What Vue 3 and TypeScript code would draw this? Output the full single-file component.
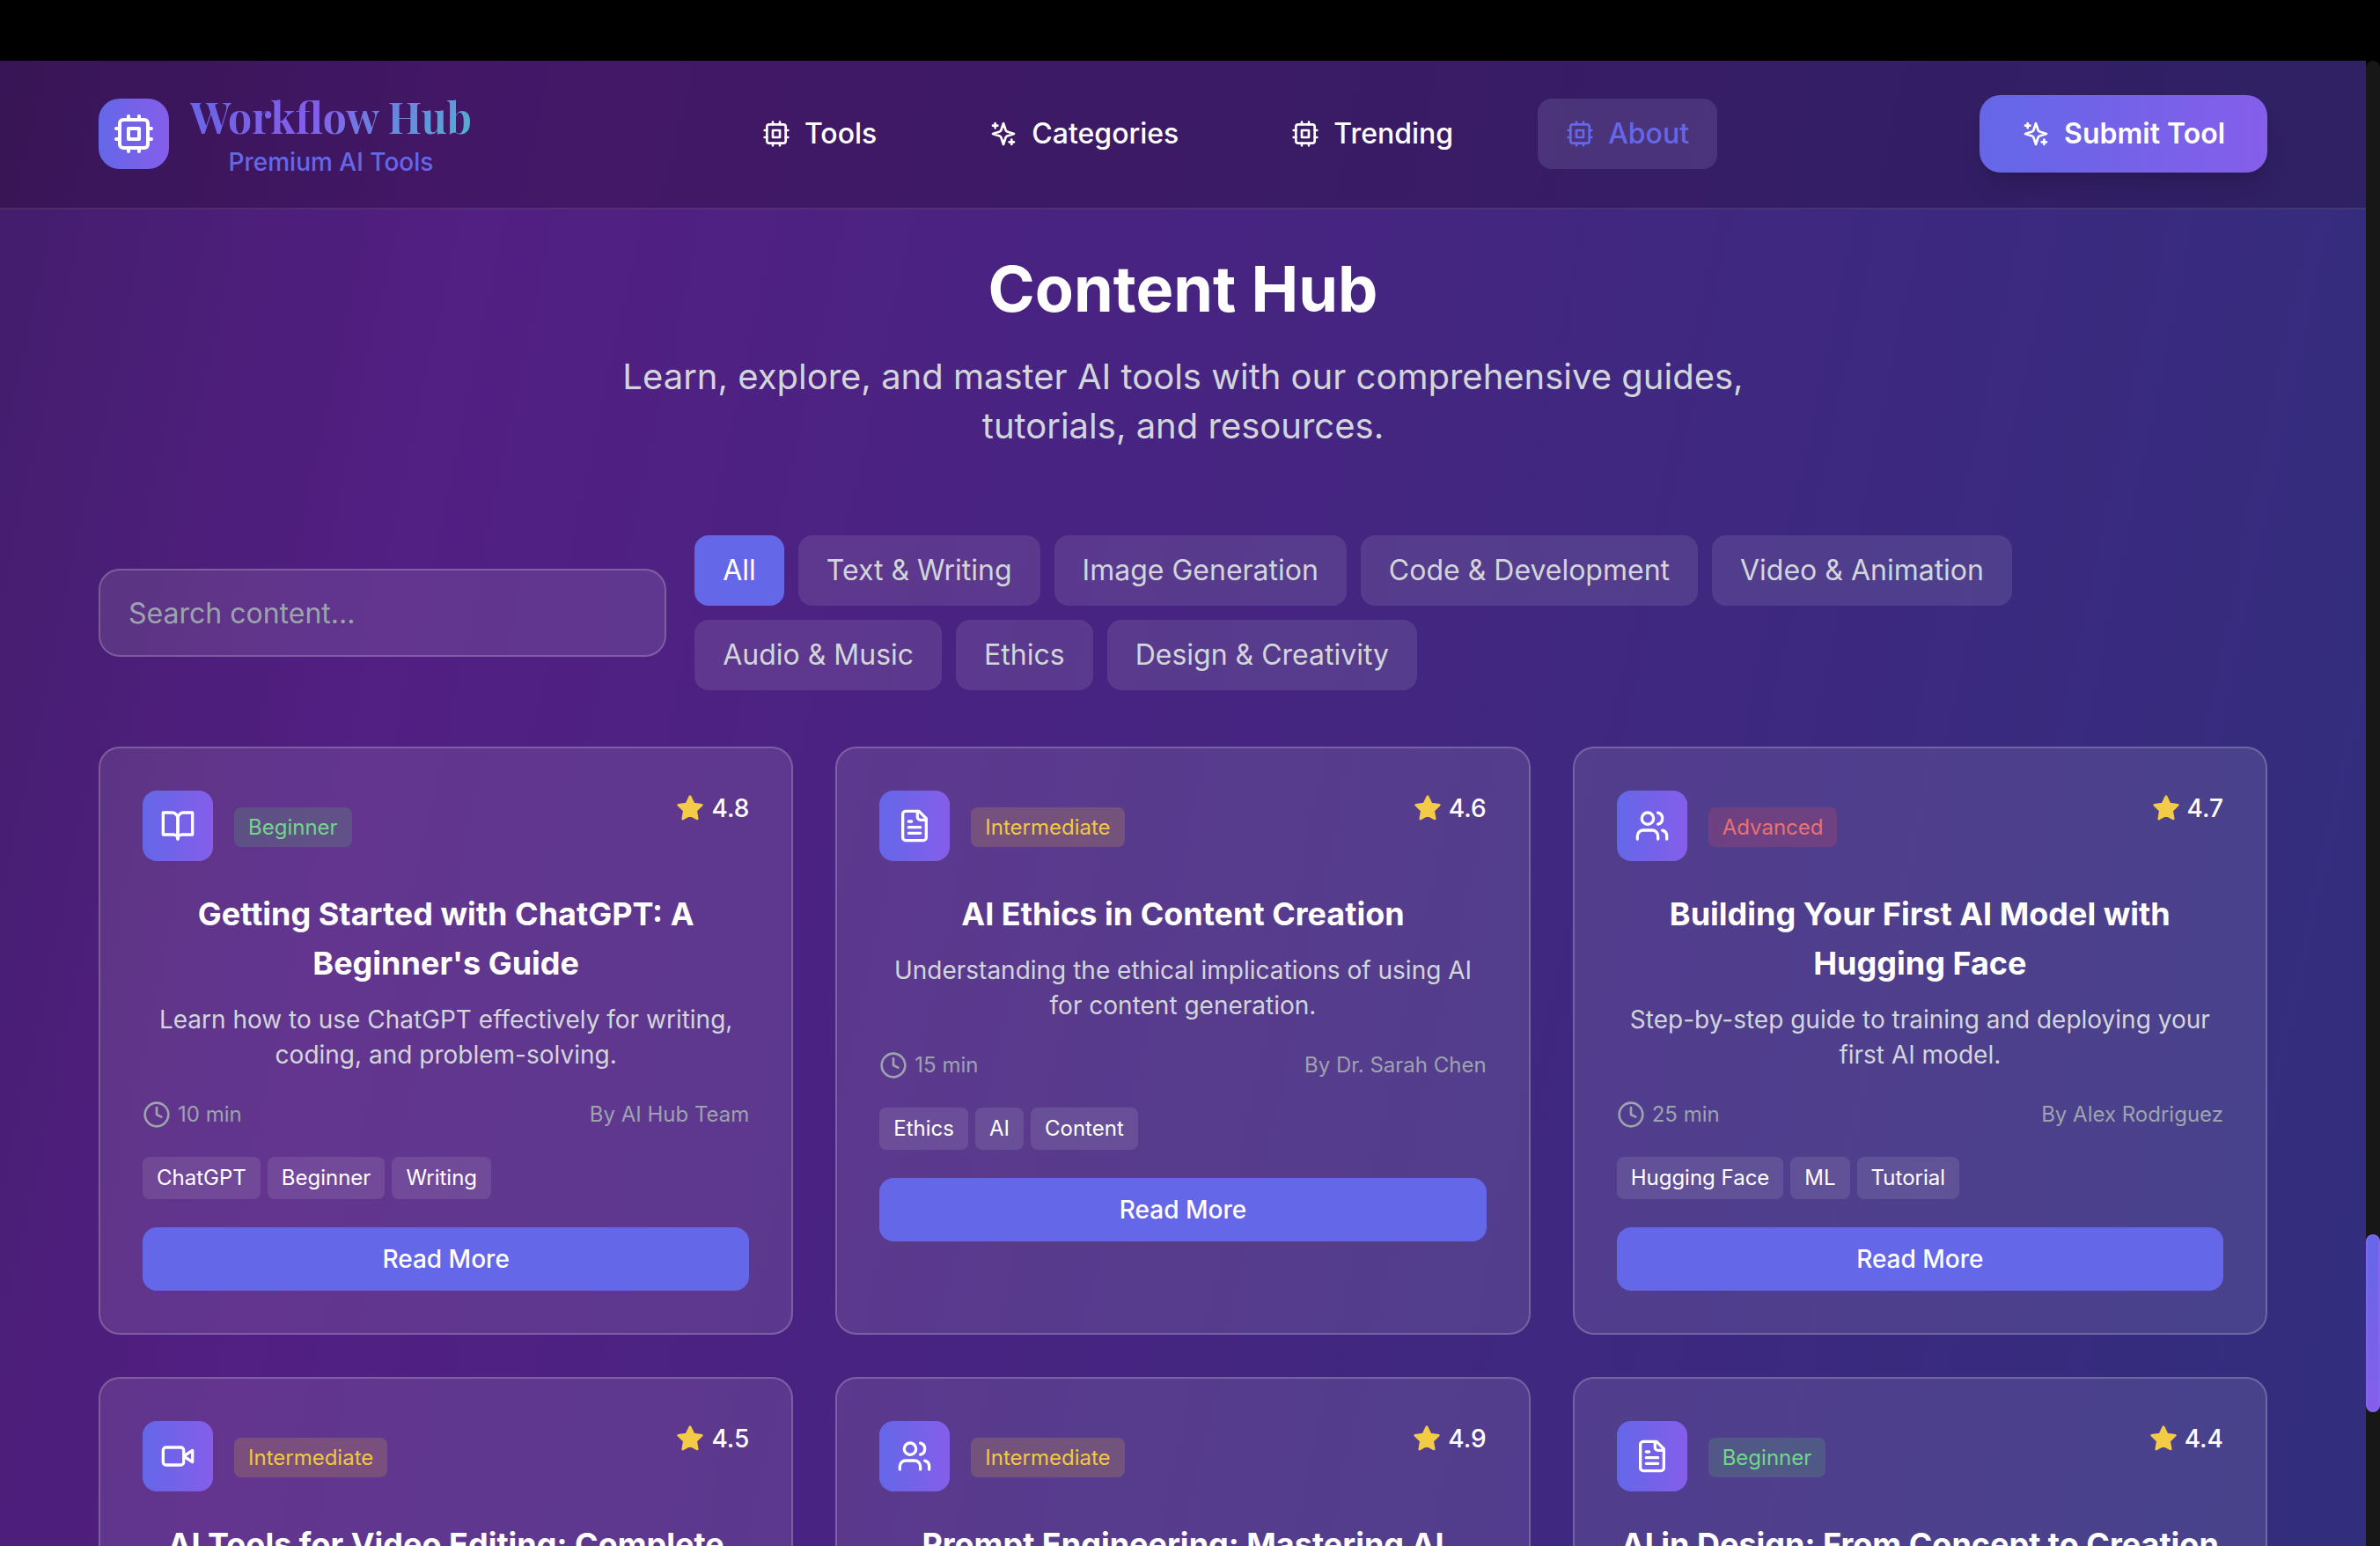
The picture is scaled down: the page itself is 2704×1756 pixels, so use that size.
<script setup lang="ts">
import { h, ref } from 'vue'

type Level = 'Beginner' | 'Intermediate' | 'Advanced'

interface Guide {
  icon: string
  level: Level
  rating: string
  title: string
  summary?: string
  duration?: string
  author?: string
  tags?: string[]
}

/* 24-unit stroke icons, each a list of path outlines */
const glyphs: Record<string, string[]> = {
  chip: [
    'M6 4h12a2 2 0 0 1 2 2v12a2 2 0 0 1-2 2H6a2 2 0 0 1-2-2V6a2 2 0 0 1 2-2z',
    'M9 9h6v6H9z',
    'M15 2v2M15 20v2M2 15h2M2 9h2M20 15h2M20 9h2M9 2v2M9 20v2',
  ],
  sparkles: [
    'm12 3-1.912 5.813a2 2 0 0 1-1.275 1.275L3 12l5.813 1.912a2 2 0 0 1 1.275 1.275L12 21l1.912-5.813a2 2 0 0 1 1.275-1.275L21 12l-5.813-1.912a2 2 0 0 1-1.275-1.275L12 3Z',
    'M5 3v4M19 17v4M3 5h4M17 19h4',
  ],
  book: [
    'M2 3h6a4 4 0 0 1 4 4v14a3 3 0 0 0-3-3H2z',
    'M22 3h-6a4 4 0 0 0-4 4v14a3 3 0 0 1 3-3h7z',
  ],
  file: [
    'M15 2H6a2 2 0 0 0-2 2v16a2 2 0 0 0 2 2h12a2 2 0 0 0 2-2V7Z',
    'M14 2v4a2 2 0 0 0 2 2h4',
    'M10 9H8M16 13H8M16 17H8',
  ],
  users: [
    'M16 21v-2a4 4 0 0 0-4-4H6a4 4 0 0 0-4 4v2',
    'M13 7a4 4 0 1 1-8 0a4 4 0 1 1 8 0z',
    'M22 21v-2a4 4 0 0 0-3-3.87M16 3.13a4 4 0 0 1 0 7.75',
  ],
  video: [
    'm22 8-6 4 6 4V8Z',
    'M4 6h10a2 2 0 0 1 2 2v8a2 2 0 0 1-2 2H4a2 2 0 0 1-2-2V8a2 2 0 0 1 2-2z',
  ],
  star: ['M12 2l3.09 6.26L22 9.27l-5 4.87 1.18 6.88L12 17.77l-6.18 3.25L7 14.14 2 9.27l6.91-1.01L12 2z'],
  clock: ['M22 12a10 10 0 1 1-20 0a10 10 0 1 1 20 0z', 'M12 6v6l4 2'],
}

const Glyph = (props: { name: string }) =>
  h(
    'svg',
    { viewBox: '0 0 24 24', 'aria-hidden': 'true' },
    glyphs[props.name].map((d) => h('path', { d })),
  )
Glyph.props = ['name']

const links = [
  { label: 'Tools', icon: 'chip' },
  { label: 'Categories', icon: 'sparkles' },
  { label: 'Trending', icon: 'chip' },
  { label: 'About', icon: 'chip', current: true },
]

const categories = [
  'All',
  'Text & Writing',
  'Image Generation',
  'Code & Development',
  'Video & Animation',
  'Audio & Music',
  'Ethics',
  'Design & Creativity',
]

const selected = ref('All')
const query = ref('')

const guides: Guide[] = [
  {
    icon: 'book',
    level: 'Beginner',
    rating: '4.8',
    title: "Getting Started with ChatGPT: A Beginner's Guide",
    summary: 'Learn how to use ChatGPT effectively for writing, coding, and problem-solving.',
    duration: '10 min',
    author: 'AI Hub Team',
    tags: ['ChatGPT', 'Beginner', 'Writing'],
  },
  {
    icon: 'file',
    level: 'Intermediate',
    rating: '4.6',
    title: 'AI Ethics in Content Creation',
    summary: 'Understanding the ethical implications of using AI for content generation.',
    duration: '15 min',
    author: 'Dr. Sarah Chen',
    tags: ['Ethics', 'AI', 'Content'],
  },
  {
    icon: 'users',
    level: 'Advanced',
    rating: '4.7',
    title: 'Building Your First AI Model with Hugging Face',
    summary: 'Step-by-step guide to training and deploying your first AI model.',
    duration: '25 min',
    author: 'Alex Rodriguez',
    tags: ['Hugging Face', 'ML', 'Tutorial'],
  },
  { icon: 'video', level: 'Intermediate', rating: '4.5', title: 'AI Tools for Video Editing: Complete' },
  { icon: 'users', level: 'Intermediate', rating: '4.9', title: 'Prompt Engineering: Mastering AI' },
  { icon: 'file', level: 'Beginner', rating: '4.4', title: 'AI in Design: From Concept to Creation' },
]
</script>

<template>
  <div class="screen">
    <div class="top-strip"></div>
    <div class="viewport">
      <div class="page">
        <header class="header">
          <a class="brand" href="#">
            <span class="brand-mark"><Glyph name="chip" class="icon-lg" /></span>
            <span class="brand-text">
              <span class="brand-name">Workflow Hub</span>
              <span class="brand-tagline">Premium AI Tools</span>
            </span>
          </a>
          <nav class="nav">
            <a
              v-for="link in links"
              :key="link.label"
              href="#"
              class="nav-link"
              :class="{ current: link.current }"
            >
              <Glyph :name="link.icon" class="icon-sm" />
              <span>{{ link.label }}</span>
            </a>
          </nav>
          <button type="button" class="submit">
            <Glyph name="sparkles" class="icon-sm" />
            <span>Submit Tool</span>
          </button>
        </header>

        <main class="main">
          <div class="hero">
            <h1>Content Hub</h1>
            <p>Learn, explore, and master AI tools with our comprehensive guides, tutorials, and resources.</p>
          </div>

          <div class="controls">
            <input
              v-model="query"
              class="search"
              type="text"
              placeholder="Search content..."
              aria-label="Search content"
            />
            <div class="filters">
              <button
                v-for="category in categories"
                :key="category"
                type="button"
                class="filter"
                :class="{ active: category === selected }"
                @click="selected = category"
              >
                {{ category }}
              </button>
            </div>
          </div>

          <div class="cards">
            <article v-for="guide in guides" :key="guide.title" class="card">
              <div class="card-top">
                <div class="card-kind">
                  <span class="card-mark"><Glyph :name="guide.icon" class="icon-md" /></span>
                  <div>
                    <span class="badge" :class="guide.level.toLowerCase()">{{ guide.level }}</span>
                  </div>
                </div>
                <div class="rating">
                  <Glyph name="star" class="icon-sm star" />
                  <span>{{ guide.rating }}</span>
                </div>
              </div>
              <h2>{{ guide.title }}</h2>
              <template v-if="guide.summary">
                <p class="summary">{{ guide.summary }}</p>
                <div class="meta">
                  <span class="duration">
                    <Glyph name="clock" class="icon-sm" />
                    <span>{{ guide.duration }}</span>
                  </span>
                  <span>By {{ guide.author }}</span>
                </div>
                <ul class="tags">
                  <li v-for="tag in guide.tags" :key="tag">{{ tag }}</li>
                </ul>
                <button type="button" class="read-more">Read More</button>
              </template>
            </article>
          </div>
        </main>
      </div>
      <div class="scroll-track"><div class="scroll-thumb"></div></div>
    </div>
  </div>
</template>

<style>
body {
  margin: 0;
  background: #000;
}
</style>

<style scoped>
.screen {
  display: flex;
  flex-direction: column;
  height: 100vh;
  overflow: hidden;
  font-family: Inter, 'Liberation Sans', sans-serif;
  font-size: 32px;
  line-height: 48px;
  color: #fff;
}

.screen * {
  box-sizing: border-box;
}

button,
input {
  font: inherit;
  color: inherit;
  border: 0;
  margin: 0;
}

button {
  cursor: pointer;
}

a {
  color: inherit;
  text-decoration: none;
}

svg {
  flex: none;
  display: block;
  fill: none;
  stroke: currentColor;
  stroke-width: 2;
  stroke-linecap: round;
  stroke-linejoin: round;
}

.icon-sm {
  width: 32px;
  height: 32px;
}

.icon-md {
  width: 40px;
  height: 40px;
}

.icon-lg {
  width: 48px;
  height: 48px;
}

.top-strip {
  flex: none;
  height: 69px;
  background: #000;
}

.viewport {
  flex: 1;
  min-height: 0;
  display: flex;
}

.page {
  flex: 1;
  min-width: 0;
  overflow: hidden;
  background: linear-gradient(102deg, #431d6c 0%, #521f83 19%, #322e7e 100%);
}

/* Header */
.header {
  display: flex;
  align-items: center;
  justify-content: space-between;
  padding: 31px 112px 32px;
  background: rgba(22, 0, 20, 0.25);
  border-bottom: 2px solid rgba(255, 255, 255, 0.1);
}

.brand {
  display: flex;
  align-items: center;
  gap: 24px;
}

.brand-mark,
.card-mark {
  display: flex;
  align-items: center;
  justify-content: center;
  width: 80px;
  height: 80px;
  background: linear-gradient(90deg, #6467e8, #855eea);
}

.brand-mark {
  border-radius: 24px;
}

.brand-text {
  display: flex;
  flex-direction: column;
  text-align: center;
}

.brand-name {
  font-family: 'Playfair Display', 'Liberation Serif', serif;
  font-size: 48px;
  font-weight: 700;
  line-height: 64px;
  color: transparent;
  background: linear-gradient(135deg, #6467e8 0%, #835eea 45%, #4ab8d0 100%);
  background-clip: text;
}

.brand-tagline {
  font-size: 28px;
  font-weight: 500;
  line-height: 40px;
  color: #6467e8;
}

.nav {
  display: flex;
  gap: 64px;
}

.nav-link {
  display: flex;
  align-items: center;
  gap: 16px;
  padding: 16px 32px;
  border-radius: 16px;
  font-weight: 500;
}

.nav-link.current {
  color: #6467e8;
  background: rgba(200, 190, 255, 0.14);
}

.submit {
  display: flex;
  align-items: center;
  gap: 16px;
  padding: 20px 48px;
  border-radius: 24px;
  font-weight: 600;
  background: linear-gradient(90deg, #6467e8, #855eea);
  box-shadow: 0 20px 30px -6px rgba(0, 0, 0, 0.1), 0 8px 12px -4px rgba(0, 0, 0, 0.1);
}

/* Intro */
.main {
  padding: 50px 112px 0;
}

.hero {
  max-width: 1344px;
  margin: 0 auto 96px;
  text-align: center;
}

h1 {
  margin: 0 0 32px;
  font-size: 72px;
  font-weight: 700;
  line-height: 80px;
}

.hero p {
  margin: 0;
  font-size: 40px;
  line-height: 56px;
  color: #d2d5da;
}

/* Search and filters */
.controls {
  display: grid;
  grid-template-columns: 13fr 36fr;
  align-items: center;
  gap: 32px;
  margin-bottom: 64px;
}

.search {
  width: 100%;
  height: 100px;
  padding: 0 32px;
  border: 2px solid rgba(255, 255, 255, 0.2);
  border-radius: 24px;
  background: rgba(255, 255, 255, 0.1);
  outline: none;
}

.search::placeholder {
  color: #9da3ae;
  opacity: 1;
}

.filters {
  display: flex;
  flex-wrap: wrap;
  gap: 16px;
}

.filter {
  padding: 16px 32px;
  border-radius: 16px;
  color: #d2d5da;
  background: rgba(255, 255, 255, 0.1);
}

.filter.active {
  color: #fff;
  background: #6467e8;
}

/* Cards */
.cards {
  display: grid;
  grid-template-columns: repeat(3, minmax(0, 1fr));
  gap: 48px;
}

.card {
  padding: 48px;
  border: 2px solid rgba(255, 255, 255, 0.2);
  border-radius: 24px;
  background: rgba(255, 255, 255, 0.1);
}

.card-top {
  display: flex;
  align-items: flex-start;
  justify-content: space-between;
  margin-bottom: 32px;
}

.card-kind {
  display: flex;
  align-items: center;
  gap: 24px;
}

.card-mark {
  border-radius: 16px;
}

.badge {
  padding: 8px 16px;
  border-radius: 8px;
  font-size: 24px;
}

.badge.beginner {
  color: #74d58c;
  background: rgba(90, 195, 110, 0.2);
}

.badge.intermediate {
  color: #f0c845;
  background: rgba(225, 180, 60, 0.2);
}

.badge.advanced {
  color: #e87272;
  background: rgba(230, 80, 90, 0.2);
}

.rating {
  display: flex;
  align-items: center;
  gap: 8px;
  font-size: 28px;
  font-weight: 500;
  line-height: 40px;
}

.star {
  color: #f3cb46;
  fill: currentColor;
}

h2 {
  margin: 0;
  font-size: 36px;
  font-weight: 700;
  line-height: 56px;
  text-align: center;
}

.summary {
  margin: 16px 0 32px;
  font-size: 28px;
  line-height: 40px;
  text-align: center;
  color: #d2d5da;
}

.meta {
  display: flex;
  align-items: center;
  justify-content: space-between;
  margin-bottom: 32px;
  font-size: 24px;
  line-height: 32px;
  color: #9da3ae;
}

.duration {
  display: flex;
  align-items: center;
  gap: 8px;
}

.tags {
  display: flex;
  flex-wrap: wrap;
  gap: 8px;
  margin: 0 0 32px;
  padding: 0;
  list-style: none;
}

.tags li {
  padding: 8px 16px;
  border-radius: 8px;
  font-size: 24px;
  line-height: 32px;
  background: rgba(255, 255, 255, 0.1);
}

.read-more {
  display: block;
  width: 100%;
  padding: 16px 32px;
  border-radius: 16px;
  font-size: 28px;
  font-weight: 500;
  line-height: 40px;
  background: #6467e8;
}

/* Scrollbar */
.scroll-track {
  position: relative;
  flex: none;
  width: 16px;
  border-radius: 8px 8px 0 0;
  background: #171717;
}

.scroll-thumb {
  position: absolute;
  bottom: 9%;
  left: 0;
  width: 100%;
  height: 12%;
  border: 2px solid #8168ee;
  border-radius: 8px;
  background: linear-gradient(180deg, #6467e8, #855eea);
}
</style>
